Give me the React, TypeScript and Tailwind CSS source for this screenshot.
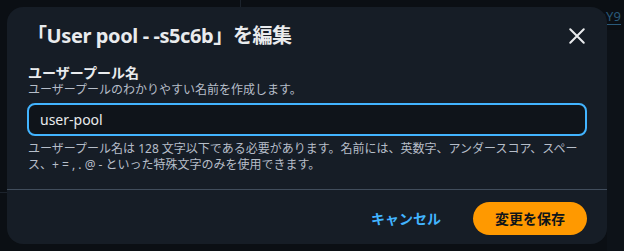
import React from "react";

export default function App() {
  const font = { fontFamily: '"Noto Sans", "Noto Sans CJK JP", sans-serif' };
  return (
    <div
      className="relative w-[624px] h-[251px] overflow-hidden bg-[#0b0f14]"
      style={font}
    >
      {/* dimmed page behind */}
      <div className="absolute left-[240px] top-0 h-[7px] w-px bg-[#1c232c]" />
      <div className="absolute left-[598px] top-[8px] text-[13px] leading-[16px] text-[#2a5a7a] border-b border-[#2a5a7a]">nY9</div>
      <div className="absolute left-0 top-[192px] w-[8px] h-px bg-[#1c232c]" />
      <div className="absolute right-0 top-[192px] w-[18px] h-px bg-[#1c232c]" />
      <div className="absolute right-0 top-[30px] bottom-0 w-[17px] bg-[#0d1218]" />

      <div className="absolute left-[7px] top-[7px] w-[600px] h-[237px] rounded-[16px] bg-[#161d26] flex flex-col">
        <div className="flex items-start justify-between pl-[20px] pr-[20px] pt-[17px]">
          <h2 className="text-[20px] leading-[24px] font-bold text-[#e9ebed] tracking-[-0.4px]">
            「User pool - -s5c6b」を編集
          </h2>
          <button className="mt-[2px] w-[20px] h-[20px] flex items-center justify-center text-[#e9ebed]">
            <svg width="18" height="18" viewBox="0 0 16 16" fill="none">
              <path d="M2 2l12 12M14 2L2 14" stroke="currentColor" strokeWidth="1.8" strokeLinecap="round" />
            </svg>
          </button>
        </div>

        <div className="px-[20px] pt-[16px] flex flex-col">
          <label className="pl-px text-[14px] leading-[18px] font-bold text-[#e9ebed]">
            ユーザープール名
          </label>
          <div className="pl-px text-[12px] leading-[16px] text-[#b6bec9]">
            ユーザープールのわかりやすい名前を作成します。
          </div>
          <div className="mt-[5px] h-[33px] rounded-[8px] border-2 border-[#42b4ff] bg-[#0f141a] flex items-center px-[11px]">
            <span className="text-[14px] leading-[18px] text-[#e9ebed]">user-pool</span>
          </div>
          <div className="mt-[5px] pl-px text-[12px] leading-[16px] text-[#b6bec9]">
            <div className="whitespace-nowrap">
              ユーザープール名は 128 文字以下である必要があります。名前には、英数字、アンダースコア、スペー
            </div>
            <div className="whitespace-nowrap">ス、+ = , . @ - といった特殊文字のみを使用できます。</div>
          </div>
        </div>

        <div className="mt-[16px] h-px bg-[#414d5c]" />

        <div className="flex items-center justify-end gap-[32px] px-[20px] pt-[12px]">
          <button className="text-[14px] leading-[18px] font-bold text-[#42b4ff]">キャンセル</button>
          <button className="h-[33px] w-[114px] rounded-full bg-[#ff9900] text-[14px] leading-[18px] font-bold text-[#0f141a]">
            変更を保存
          </button>
        </div>
      </div>
    </div>
  );
}
